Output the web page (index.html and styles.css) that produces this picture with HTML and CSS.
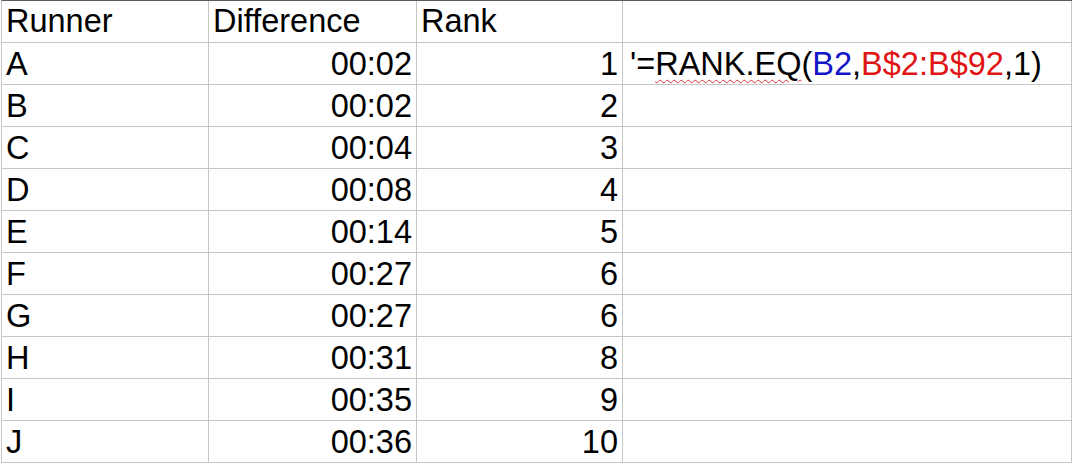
FILE: index.html
```html
<!DOCTYPE html>
<html>
<head>
<meta charset="utf-8">
<link rel="stylesheet" href="styles.css">
</head>
<body>
<div class="sheet">
  <div class="cell">Runner</div><div class="cell">Difference</div><div class="cell">Rank</div><div class="cell"></div>
  <div class="cell">A</div><div class="cell num">00:02</div><div class="cell num">1</div><div class="cell formula">'=<span class="spell">RANK.EQ</span>(<span class="ref1">B2</span>,<span class="ref2">B$2:B$92</span>,1)</div>
  <div class="cell">B</div><div class="cell num">00:02</div><div class="cell num">2</div><div class="cell"></div>
  <div class="cell">C</div><div class="cell num">00:04</div><div class="cell num">3</div><div class="cell"></div>
  <div class="cell">D</div><div class="cell num">00:08</div><div class="cell num">4</div><div class="cell"></div>
  <div class="cell">E</div><div class="cell num">00:14</div><div class="cell num">5</div><div class="cell"></div>
  <div class="cell">F</div><div class="cell num">00:27</div><div class="cell num">6</div><div class="cell"></div>
  <div class="cell">G</div><div class="cell num">00:27</div><div class="cell num">6</div><div class="cell"></div>
  <div class="cell">H</div><div class="cell num">00:31</div><div class="cell num">8</div><div class="cell"></div>
  <div class="cell">I</div><div class="cell num">00:35</div><div class="cell num">9</div><div class="cell"></div>
  <div class="cell">J</div><div class="cell num">00:36</div><div class="cell num">10</div><div class="cell"></div>
</div>
</body>
</html>
```
FILE: styles.css
```css
html, body {
  margin: 0;
  padding: 0;
  background: #ffffff;
}
.sheet {
  display: grid;
  grid-template-columns: 207px 208px 206px 449px;
  grid-auto-rows: 42px;
  margin-left: 1px;
  width: max-content;
  border-top: 1px solid #5a5a5a;
  border-left: 1px solid #c6c6c6;
  font-family: "Liberation Sans", Arial, sans-serif;
  font-size: 32.5px;
  color: #000000;
}
.cell {
  box-sizing: border-box;
  border-right: 1px solid #c6c6c6;
  border-bottom: 1px solid #c6c6c6;
  line-height: 36px;
  padding: 3px 4px 0 4px;
  white-space: nowrap;
  overflow: visible;
}
.sheet > .cell:nth-child(-n+4) {
  padding-top: 2px;
}
.num {
  text-align: right;
}
.formula {
  padding-left: 7px;
}
.spell {
  text-decoration: underline wavy #e03030;
  text-decoration-thickness: 1px;
  text-underline-offset: 4px;
}
.ref1 {
  color: #1414c8;
}
.ref2 {
  color: #e01414;
}
```
